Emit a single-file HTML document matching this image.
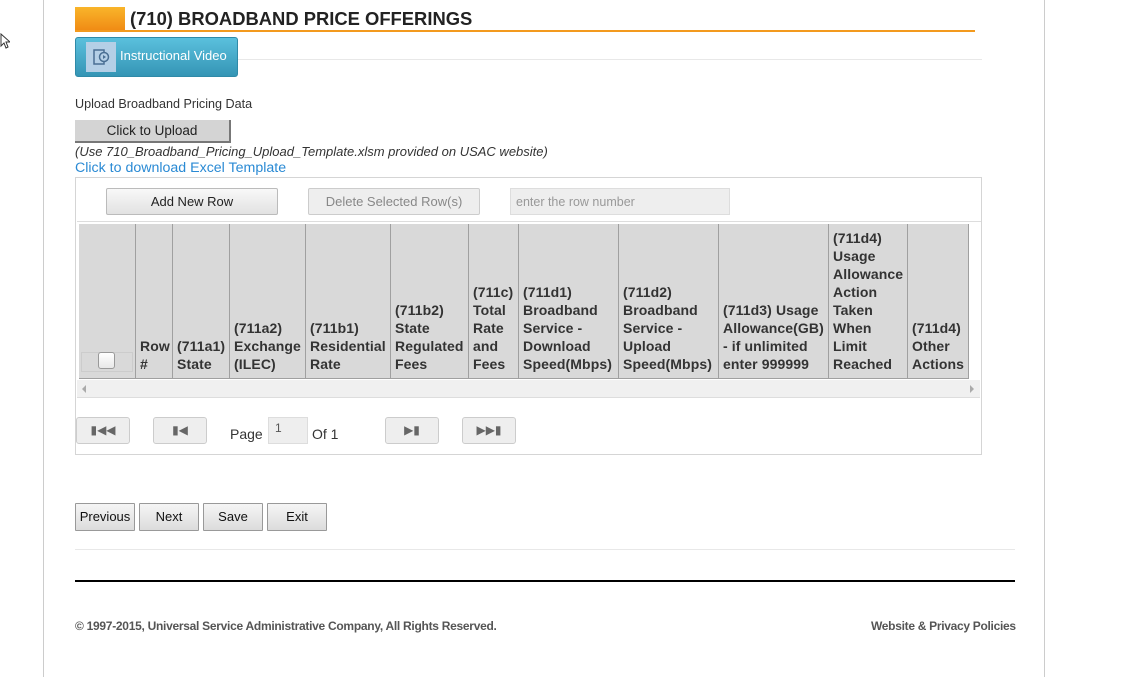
<!DOCTYPE html>
<html><head><meta charset="utf-8"><style>
*{box-sizing:border-box;margin:0;padding:0}
body{width:1145px;height:677px;background:#fff;font-family:"Liberation Sans",Arial,sans-serif;position:relative;overflow:hidden;color:#333}
.a{position:absolute}
.col{position:absolute;top:224px;height:155px;border-right:1px solid #a0a0a0;font-weight:bold;font-size:14px;line-height:18px;color:#333;padding:0 2px 6px 4px;display:flex;flex-direction:column;justify-content:flex-end;letter-spacing:0.1px}
.btn{position:absolute;border:1px solid #bbb;border-radius:2px;background:linear-gradient(#f8f8f8,#e2e2e2);font-size:13px;text-align:center;color:#222}
.pb{position:absolute;top:417px;height:27px;border:1px solid #ccc;border-radius:3px;background:#eee;font-size:12px;color:#666;text-align:center;line-height:24px}
.nb{position:absolute;top:503px;height:28px;border:1px solid #999;border-radius:1px;background:linear-gradient(#f5f5f5,#dcdcdc);font-size:13px;color:#111;text-align:center;line-height:25px}
</style></head><body>
<div class="a" style="left:43px;top:0;width:1px;height:677px;background:#ccc"></div>
<div class="a" style="left:1044px;top:0;width:1px;height:677px;background:#ccc"></div>
<svg class="a" style="left:0;top:33px" width="10" height="16" viewBox="0 0 10 16"><path d="M1 1v12l3-3 2 5 2-1-2-5h4z" fill="#fff" stroke="#333" stroke-width="1"/></svg>
<div class="a" style="left:75px;top:7px;width:50px;height:24px;background:linear-gradient(#f9b52a,#f08a14)"></div>
<div class="a" style="left:75px;top:30px;width:900px;height:2px;background:#f39a1e"></div>
<div class="a" style="left:130px;top:8px;font-size:18.4px;font-weight:bold;color:#222">(710) BROADBAND PRICE OFFERINGS</div>
<div class="a" style="left:238px;top:59px;width:744px;height:1px;background:#e8e8e8"></div>
<div class="a" style="left:75px;top:37px;width:163px;height:40px;border-radius:3px;background:linear-gradient(#5ac0dd,#3595b5);border:1px solid #2f8aa8"></div>
<div class="a" style="left:86px;top:42px;width:30px;height:30px;background:#b4cfe6"></div>
<svg class="a" style="left:93px;top:48px" width="18" height="18" viewBox="0 0 18 18"><rect x="1" y="2" width="10" height="14" fill="none" stroke="#4a6f93" stroke-width="1.5"/><circle cx="11" cy="9" r="4.5" fill="#b4cfe6" stroke="#4a6f93" stroke-width="1.5"/><path d="M10 7v4l3-2z" fill="#4a6f93"/></svg>
<div class="a" style="left:120px;top:48px;font-size:13px;color:#fff">Instructional Video</div>
<div class="a" style="left:75px;top:97px;font-size:12.6px;color:#333">Upload Broadband Pricing Data</div>
<div class="a" style="left:75px;top:120px;width:156px;height:23px;background:#d4d4d4;border-right:2px solid #777;border-bottom:2px solid #777;font-size:13.5px;text-align:center;line-height:22px;color:#222">Click to Upload</div>
<div class="a" style="left:75px;top:144px;font-size:13px;font-style:italic;color:#333">(Use 710_Broadband_Pricing_Upload_Template.xlsm provided on USAC website)</div>
<div class="a" style="left:75px;top:160px;font-size:14.2px;color:#2a8ad4">Click to download Excel Template</div>
<div class="a" style="left:75px;top:177px;width:907px;height:278px;border:1px solid #d5d5d5"></div>
<div class="btn" style="left:106px;top:188px;width:172px;height:27px;line-height:25px">Add New Row</div>
<div class="btn" style="left:308px;top:188px;width:172px;height:27px;line-height:25px;color:#888;border-color:#ccc;background:#eee">Delete Selected Row(s)</div>
<div class="a" style="left:510px;top:188px;width:220px;height:27px;background:#eee;border:1px solid #ddd;font-size:12.5px;color:#999;padding:6px 5px">enter the row number</div>
<div class="a" style="left:77px;top:221px;width:904px;height:1px;background:#ddd"></div>
<div class="a" style="left:79px;top:224px;width:889px;height:155px;background:#d9d9d9;border-bottom:1px solid #a0a0a0"></div>
<div class="col" style="left:79px;width:57px"></div>
<div class="a" style="left:81px;top:352px;width:52px;height:20px;border:1px solid #ccc"></div>
<div class="a" style="left:98px;top:352px;width:17px;height:17px;border:1px solid #999;border-radius:3px;background:linear-gradient(#fff,#e8e8e8)"></div>
<div class="col" style="left:136px;width:37px">Row #</div>
<div class="col" style="left:173px;width:57px">(711a1) State</div>
<div class="col" style="left:230px;width:76px">(711a2) Exchange (ILEC)</div>
<div class="col" style="left:306px;width:85px">(711b1) Residential Rate</div>
<div class="col" style="left:391px;width:78px">(711b2) State Regulated Fees</div>
<div class="col" style="left:469px;width:50px">(711c) Total Rate and Fees</div>
<div class="col" style="left:519px;width:100px">(711d1) Broadband Service - Download Speed(Mbps)</div>
<div class="col" style="left:619px;width:100px">(711d2) Broadband Service - Upload Speed(Mbps)</div>
<div class="col" style="left:719px;width:110px">(711d3) Usage Allowance(GB) - if unlimited enter 999999</div>
<div class="col" style="left:829px;width:79px">(711d4) Usage Allowance Action Taken When Limit Reached</div>
<div class="col" style="left:908px;width:61px">(711d4) Other Actions</div>
<div class="a" style="left:77px;top:380px;width:903px;height:18px;background:#f0f0f0;border-bottom:1px solid #ddd"></div>
<div class="a" style="left:82px;top:385px;width:0;height:0;border-top:4px solid transparent;border-bottom:4px solid transparent;border-right:4px solid #aaa"></div>
<div class="a" style="left:970px;top:385px;width:0;height:0;border-top:4px solid transparent;border-bottom:4px solid transparent;border-left:4px solid #aaa"></div>
<div class="pb" style="left:76px;width:54px">&#9646;&#9664;&#9664;</div>
<div class="pb" style="left:153px;width:54px">&#9646;&#9664;</div>
<div class="a" style="left:230px;top:426px;font-size:14px;color:#333">Page</div>
<div class="a" style="left:268px;top:417px;width:40px;height:27px;background:#eee;border:1px solid #ddd;font-size:12px;color:#555;padding:3px 6px">1</div>
<div class="a" style="left:312px;top:426px;font-size:14px;color:#333">Of 1</div>
<div class="pb" style="left:385px;width:54px">&#9654;&#9646;</div>
<div class="pb" style="left:462px;width:54px">&#9654;&#9654;&#9646;</div>
<div class="nb" style="left:75px;width:60px">Previous</div>
<div class="nb" style="left:139px;width:60px">Next</div>
<div class="nb" style="left:203px;width:60px">Save</div>
<div class="nb" style="left:267px;width:60px">Exit</div>
<div class="a" style="left:75px;top:549px;width:940px;height:1px;background:#e8e8e8"></div>
<div class="a" style="left:75px;top:580px;width:940px;height:2px;background:#000"></div>
<div class="a" style="left:75px;top:619px;font-size:12px;font-weight:bold;color:#555;letter-spacing:-0.28px">© 1997-2015, Universal Service Administrative Company, All Rights Reserved.</div>
<div class="a" style="left:871px;top:619px;font-size:12px;font-weight:bold;color:#555;letter-spacing:-0.3px">Website &amp; Privacy Policies</div>
</body></html>
